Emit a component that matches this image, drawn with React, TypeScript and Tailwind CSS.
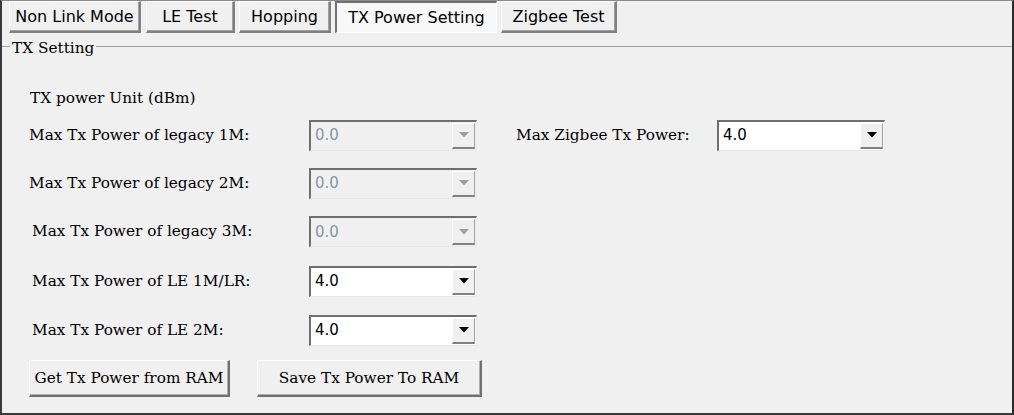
import React from "react";

const serif = { fontFamily: '"DejaVu Serif", "Liberation Serif", serif' };

function Tab({ label, w, selected }: { label: string; w: string; selected?: boolean }) {
  return (
    <div
      className={`${w} h-[32px] flex items-center justify-center text-[16px] text-black ${
        selected
          ? "bg-[#f8f8f8] border-t-2 border-l-2 border-t-[#707070] border-l-[#707070] border-b border-r border-b-white border-r-white"
          : "bg-[#f0f0f0] border-t border-l border-t-white border-l-white border-b-2 border-r-2 border-b-[#808080] border-r-[#808080] shadow-[inset_-1px_-1px_0_#a0a0a0]"
      }`}
      style={{ fontFamily: '"DejaVu Sans", "Liberation Sans", sans-serif' }}
    >
      {label}
    </div>
  );
}

function Combo({ value, disabled }: { value: string; disabled?: boolean }) {
  return (
    <div
      className={`w-[168px] h-[31px] flex items-stretch border-t-2 border-l-2 border-t-[#6f6f6f] border-l-[#6f6f6f] border-b border-r border-b-[#e8e8e8] border-r-[#e8e8e8] ${
        disabled ? "bg-[#f0f0f0]" : "bg-white"
      }`}
    >
      <div
        className={`flex-1 flex items-center pl-[4px] text-[15px] ${disabled ? "text-[#8d93a0]" : "text-black"}`}
        style={{ fontFamily: '"DejaVu Sans", "Liberation Sans", sans-serif' }}
      >
        {value}
      </div>
      <div className="w-[23px] mr-[1px] my-[1px] bg-[#f0f0f0] border-t border-l border-t-white border-l-white border-b-2 border-r border-b-[#808080] border-r-[#a0a0a0] flex items-center justify-center">
        <svg width="10" height="6" viewBox="0 0 10 6">
          <polygon points="0,0 10,0 5,5.5" fill={disabled ? "#a0a0a0" : "#000"} />
        </svg>
      </div>
    </div>
  );
}

function Row({ label, value, disabled, pl, h }: { label: string; value: string; disabled?: boolean; pl: string; h: string }) {
  return (
    <div className={`flex items-center ${h}`}>
      <div className={`w-[307px] ${pl} text-[15.3px] text-black`} style={serif}>
        {label}
      </div>
      <Combo value={value} disabled={disabled} />
    </div>
  );
}

function Btn({ label, w }: { label: string; w: string }) {
  return (
    <div
      className={`${w} h-[37px] flex items-center justify-center text-[15.3px] text-black bg-[#f0f0f0] border-t border-l border-t-white border-l-white border-b-2 border-r-2 border-b-[#707070] border-r-[#707070] shadow-[inset_-1px_-1px_0_#b0b0b0]`}
      style={serif}
    >
      {label}
    </div>
  );
}

export default function App() {
  return (
    <div className="w-[1014px] h-[415px] bg-[#f0f0f0] border-t border-t-[#8a8a8a] border-l-2 border-l-[#3a3a3a] border-r-2 border-r-[#2a2a2a] border-b-2 border-b-[#3a3a3a] overflow-hidden flex flex-col">
      <div className="flex items-start pl-[7px] pt-[0px] h-[45px]">
        <Tab label="Non Link Mode" w="w-[132px]" />
        <div className="w-[5px]" />
        <Tab label="LE Test" w="w-[89px]" />
        <div className="w-[4px]" />
        <Tab label="Hopping" w="w-[92px]" />
        <div className="w-[4px]" />
        <Tab label="TX Power Setting" w="w-[162px]" selected />
        <div className="w-[4px]" />
        <Tab label="Zigbee Test" w="w-[116px]" />
      </div>
      <div className="relative border-t border-t-[#a0a0a0] shadow-[0_1px_0_#ffffff] flex-1">
        <div className="absolute left-[8px] top-[-10px] px-[2px] bg-[#f0f0f0] text-[15.3px] text-black" style={serif}>
          TX Setting
        </div>
        <div className="flex flex-col pt-[40px]">
          <div className="pl-[28px] text-[15.3px] text-black h-[22px] flex items-center" style={serif}>
            TX power Unit (dBm)
          </div>
          <div className="flex items-start mt-[2px]">
            <div className="flex flex-col">
              <Row label="Max Tx Power of legacy 1M:" value="0.0" disabled pl="pl-[27px]" h="h-[48px]" />
              <Row label="Max Tx Power of legacy 2M:" value="0.0" disabled pl="pl-[27px]" h="h-[48px]" />
              <Row label="Max Tx Power of legacy 3M:" value="0.0" disabled pl="pl-[30px]" h="h-[49px]" />
              <Row label="Max Tx Power of LE 1M/LR:" value="4.0" pl="pl-[30px]" h="h-[50px]" />
              <Row label="Max Tx Power of LE 2M:" value="4.0" pl="pl-[30px]" h="h-[48px]" />
              <div className="flex pl-[27px] mt-[6px] gap-[27px]">
                <Btn label="Get Tx Power from RAM" w="w-[201px]" />
                <Btn label="Save Tx Power To RAM" w="w-[225px]" />
              </div>
            </div>
            <div className="flex items-center h-[48px] ml-[34px]">
              <div className="w-[201px] text-[15.3px] text-black" style={serif}>
                Max Zigbee Tx Power:
              </div>
              <Combo value="4.0" />
            </div>
          </div>
        </div>
      </div>
    </div>
  );
}
